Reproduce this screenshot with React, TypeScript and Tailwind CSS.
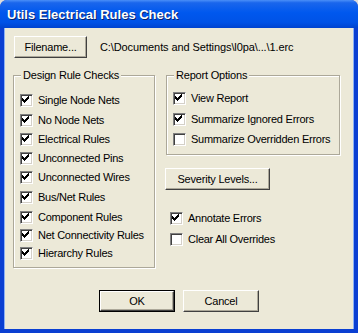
import React from "react";

const font = { fontFamily: '"Liberation Sans", Arial, sans-serif' };

function Check() {
  const tops = [2, 3, 4, 3, 2, 1, 0];
  return (
    <svg width="13" height="13" viewBox="0 0 13 13" shapeRendering="crispEdges" className="absolute left-[-2px] top-[-2px]">
      {tops.map((t, i) => (
        <rect key={i} x={3 + i} y={3 + t} width={1} height={3} fill="#000" />
      ))}
    </svg>
  );
}

function Box({ checked }: { checked: boolean }) {
  return (
    <div className="relative w-[13px] h-[13px] shrink-0 bg-white border-t border-l border-b border-r border-t-[#808080] border-l-[#808080] border-b-white border-r-white shadow-[inset_1px_1px_0_#404040,inset_-1px_-1px_0_#d4d0c8]">
      {checked && <Check />}
    </div>
  );
}

function Row({ label, checked, h }: { label: string; checked: boolean; h: string }) {
  return (
    <div className={`flex items-center ${h}`}>
      <Box checked={checked} />
      <span className="ml-[5px] text-[11px] leading-none tracking-[-0.25px] text-black whitespace-nowrap">{label}</span>
    </div>
  );
}

function Btn({ label, w, def }: { label: string; w: string; def?: boolean }) {
  const inner = (
    <div className="flex items-center justify-center w-full h-full bg-[#ece9d8] border-t border-l border-b border-r border-t-white border-l-white border-b-[#404040] border-r-[#404040] shadow-[inset_-1px_-1px_0_#aca899] text-[11px] tracking-[-0.2px] text-black leading-none">
      {label}
    </div>
  );
  return (
    <div className={`${w} h-[22px] ${def ? "border border-black" : ""}`}>{inner}</div>
  );
}

function Group({ title, w, h, children, pt }: { title: string; w: string; h: string; children: React.ReactNode; pt: string }) {
  return (
    <div className={`relative ${w} ${h} border border-[#aca899] shadow-[inset_1px_1px_0_white,1px_1px_0_white] ${pt} pl-[6px]`}>
      <span className="absolute left-[7px] top-[-7px] bg-[#ece9d8] px-[2px] text-[11px] leading-[13px] tracking-[-0.2px] text-black whitespace-nowrap">
        {title}
      </span>
      {children}
    </div>
  );
}

export default function App() {
  return (
    <div className="w-[358px] h-[333px] bg-[#dcdcdc]" style={font}>
      <div className="flex flex-col w-[358px] h-[333px] rounded-t-[7px] bg-[#0a3fd2] overflow-hidden">
        <div className="h-[28px] shrink-0 flex items-center pl-[7px] bg-[linear-gradient(to_bottom,#4a8ff8_0%,#1a66ec_10%,#0058ee_45%,#0052e6_80%,#0043cf_100%)]">
          <span className="text-white font-bold text-[13px] leading-none [text-shadow:1px_1px_0_#0a246a]">
            Utils Electrical Rules Check
          </span>
        </div>
        <div className="flex-1 mx-[4px] mb-[4px] bg-[#ece9d8] pt-[8px] flex flex-col shadow-[inset_1px_0_0_#8ab0f5,inset_-1px_0_0_#8ab0f5]">
          <div className="flex items-center pl-[10px]">
            <Btn label="Filename..." w="w-[73px]" />
            <span className="ml-[13px] text-[11px] leading-none tracking-[-0.1px] text-black whitespace-nowrap">
              C:\Documents and Settings\l0pa\...\1.erc
            </span>
          </div>
          <div className="flex pl-[9px] mt-[17px]">
            <Group title="Design Rule Checks" w="w-[142px]" h="h-[193px]" pt="pt-[15px]">
              <Row label="Single Node Nets" checked h="h-[19px]" />
              <Row label="No Node Nets" checked h="h-[20px]" />
              <Row label="Electrical Rules" checked h="h-[18px]" />
              <Row label="Unconnected Pins" checked h="h-[20px]" />
              <Row label="Unconnected Wires" checked h="h-[19px]" />
              <Row label="Bus/Net Rules" checked h="h-[21px]" />
              <Row label="Component Rules" checked h="h-[18px]" />
              <Row label="Net Connectivity Rules" checked h="h-[18px]" />
              <Row label="Hierarchy Rules" checked h="h-[18px]" />
            </Group>
            <div className="ml-[11px] flex flex-col">
              <Group title="Report Options" w="w-[174px]" h="h-[80px]" pt="pt-[12px]">
                <Row label="View Report" checked h="h-[20px]" />
                <Row label="Summarize Ignored Errors" checked h="h-[22px]" />
                <Row label="Summarize Overridden Errors" checked={false} h="h-[18px]" />
              </Group>
              <div className="mt-[13px] -ml-[1px]">
                <Btn label="Severity Levels..." w="w-[105px]" />
              </div>
              <div className="mt-[18px] ml-[4px] flex flex-col">
                <Row label="Annotate Errors" checked h="h-[21px]" />
                <Row label="Clear All Overrides" checked={false} h="h-[21px]" />
              </div>
            </div>
          </div>
          <div className="flex justify-center gap-[8px] mt-[22px]">
            <Btn label="OK" w="w-[76px]" def />
            <Btn label="Cancel" w="w-[76px]" />
          </div>
        </div>
      </div>
    </div>
  );
}
